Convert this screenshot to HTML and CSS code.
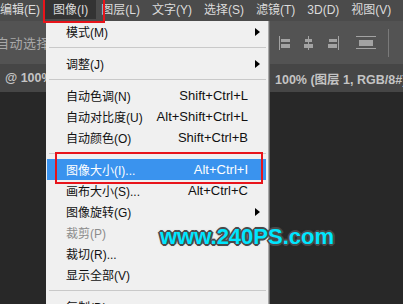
FILE: index.html
```html
<!DOCTYPE html>
<html>
<head>
    <meta charset="UTF-8">
    <title>图像菜单</title>
    <link rel="stylesheet" href="styles.css">
</head>
<body>
    <div class="app">
        <div class="menubar">
            <span class="menubar-item">编辑(E)</span>
            <span class="menubar-item active">图像(I)</span>
            <span class="menubar-item">图层(L)</span>
            <span class="menubar-item">文字(Y)</span>
            <span class="menubar-item">选择(S)</span>
            <span class="menubar-item">滤镜(T)</span>
            <span class="menubar-item">3D(D)</span>
            <span class="menubar-item">视图(V)</span>
        </div>

        <div class="options">
            <span class="tool-label">自动选择</span>
            <div class="align-icons">
                <svg width="14" height="14" viewBox="0 0 14 14"><rect x="1" y="0" width="1" height="14"/><rect x="3" y="3" width="9" height="3"/><rect x="3" y="8" width="9" height="4"/></svg>
                <svg width="14" height="14" viewBox="0 0 14 14"><rect x="6" y="0" width="1" height="14"/><rect x="3" y="3" width="7" height="3"/><rect x="2" y="8" width="9" height="4"/></svg>
                <svg width="14" height="14" viewBox="0 0 14 14"><rect x="12" y="0" width="1" height="14"/><rect x="3" y="3" width="8" height="3"/><rect x="2" y="8" width="9" height="4"/></svg>
                <svg class="wide" width="20" height="14" viewBox="0 0 20 14"><rect x="0" y="0" width="20" height="1"/><rect x="3" y="4" width="14" height="6"/><rect x="0" y="12" width="20" height="1"/></svg>
                <span class="opt-sep"></span>
            </div>
        </div>

        <div class="tabs">
            <span class="tab-text">@ 100%</span>
            <span class="tab-text">100% (图层 1, RGB/8#)</span>
        </div>

        <div class="canvas"></div>

        <div class="dropdown">
            <div class="item">模式(M)<span class="arrow"></span></div>
            <div class="sep"></div>
            <div class="item">调整(J)<span class="arrow"></span></div>
            <div class="sep"></div>
            <div class="item">自动色调(N)<span class="key">Shift+Ctrl+L</span></div>
            <div class="item">自动对比度(U)<span class="key">Alt+Shift+Ctrl+L</span></div>
            <div class="item">自动颜色(O)<span class="key">Shift+Ctrl+B</span></div>
            <div class="sep"></div>
            <div class="item selected">图像大小(I)...<span class="key">Alt+Ctrl+I</span></div>
            <div class="item">画布大小(S)...<span class="key">Alt+Ctrl+C</span></div>
            <div class="item">图像旋转(G)<span class="arrow"></span></div>
            <div class="item disabled">裁剪(P)</div>
            <div class="item">裁切(R)...</div>
            <div class="item">显示全部(V)</div>
            <div class="sep"></div>
            <div class="item">复制(D)...</div>
        </div>

        <div class="mark mark-menu"></div>
        <div class="mark mark-item"></div>
        <div class="watermark">www.240PS.com</div>
    </div>
</body>
</html>
```

FILE: styles.css
```css
body {
    margin: 0;
    background-color: #282828;
    font-family: "Liberation Sans", "Noto Sans CJK SC", sans-serif;
    overflow: hidden;
}

.app {
    position: relative;
    width: 403px;
    height: 304px;
    overflow: hidden;
    display: flex;
    flex-direction: column;
}

.menubar {
    display: flex;
    height: 21px;
    background-color: #4b4b4b;
    margin-left: -6px;
}

.menubar-item {
    padding: 0 6px;
    height: 19px;
    line-height: 20px;
    font-size: 12px;
    color: #dcdcdc;
    white-space: nowrap;
}

.menubar-item.active {
    padding: 0 8px;
    margin: 0 -1px 0 -1px;
    background-color: #333;
}

.options {
    display: flex;
    align-items: center;
    height: 43px;
    background-color: #535353;
}

.tool-label {
    margin-left: -4px;
    font-size: 13px;
    color: #a8a8a8;
    letter-spacing: 0.5px;
}

.align-icons {
    display: flex;
    align-items: center;
    gap: 10px;
    margin-left: auto;
    padding-right: 14px;
}

.align-icons svg {
    fill: #a3a3a3;
}

.align-icons .wide {
    margin-left: 6px;
}

.opt-sep {
    width: 1px;
    height: 28px;
    margin-left: 2px;
    background-color: #7a7a7a;
}

.tabs {
    display: grid;
    grid-template-columns: 270px 1fr;
    align-items: center;
    height: 28px;
    padding-left: 5px;
    background-color: #464646;
}

.tab-text {
    font-weight: bold;
    font-size: 12.5px;
    color: #c4c4c4;
    white-space: nowrap;
    overflow: hidden;
}

.canvas {
    flex: 1;
    background-color: #282828;
}

.dropdown {
    position: absolute;
    left: 46px;
    top: 21px;
    width: 219px;
    padding: 0 2px 0 1px;
    background-color: #f0f0f0;
    border-right: 1px solid #a8a8a8;
    box-shadow: 1px 0 0 #6c6c6c;
}

.item {
    display: flex;
    align-items: center;
    height: 21px;
    padding: 0 6px 0 19px;
    font-size: 12px;
    color: #111;
    white-space: nowrap;
}

.item .key {
    margin-left: auto;
    margin-right: 12px;
    font-size: 13px;
}

.item .arrow {
    margin-left: auto;
    width: 0;
    height: 0;
    border-left: 5px solid #000;
    border-top: 4.5px solid transparent;
    border-bottom: 4.5px solid transparent;
}

.item.selected {
    background-color: #3a93ee;
    color: #fff;
}

.item.disabled {
    color: #8c8c8c;
}

.sep {
    height: 1px;
    margin: 5px 0 5px 2px;
    background-color: #c9c9c9;
}

.mark {
    position: absolute;
    border: 2px solid #e8141b;
}

.mark-menu {
    left: 43px;
    top: -2px;
    width: 58px;
    height: 21px;
}

.mark-item {
    left: 55px;
    top: 152px;
    width: 204px;
    height: 28px;
}

.watermark {
    position: absolute;
    left: 160px;
    top: 226px;
    font-weight: bold;
    font-size: 22px;
    line-height: 22px;
    color: #00e6ff;
    text-shadow: 2px 0 0 #4a4a4a, -2px 0 0 #4a4a4a, 0 2px 0 #4a4a4a, 0 -2px 0 #4a4a4a,
        1px 1px 0 #4a4a4a, -1px -1px 0 #4a4a4a, 1px -1px 0 #4a4a4a, -1px 1px 0 #4a4a4a,
        0 0 3px #555;
}
```
